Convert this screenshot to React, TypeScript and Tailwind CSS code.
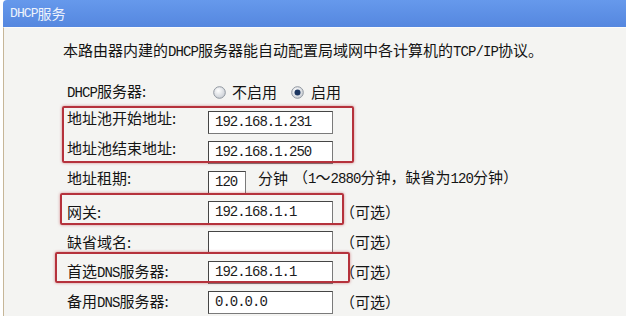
import React from "react";

const L = ({ children }: { children: React.ReactNode }) => (
  <span className="font-['Liberation_Mono',monospace] text-[14px] tracking-[-0.9px]">{children}</span>
);

const Radio = ({ checked }: { checked?: boolean }) => (
  <svg width="13" height="13" viewBox="0 0 13 13" className="shrink-0">
    <defs>
      <radialGradient id={checked ? "rg1" : "rg0"} cx="0.4" cy="0.35" r="0.7">
        <stop offset="0" stopColor="#ffffff" />
        <stop offset="1" stopColor="#c7ccd3" />
      </radialGradient>
    </defs>
    <circle cx="6.5" cy="6.5" r="5.8" fill={`url(#${checked ? "rg1" : "rg0"})`} stroke="#8f969f" strokeWidth="1" />
    {checked && <circle cx="6.5" cy="6.5" r="3" fill="#1b3660" />}
  </svg>
);

const Input = ({ value, w = "w-[125px]" }: { value?: string; w?: string }) => (
  <div
    className={`${w} h-[23px] bg-white border border-[#7a7a7a] border-t-[#454545] border-l-[#454545] flex items-center pl-[6px] font-['Liberation_Mono',monospace] text-[14px] tracking-[-1px] text-[#1c1c1c]`}
  >
    {value}
  </div>
);

const Row = ({ label, children, up }: { label: React.ReactNode; children: React.ReactNode; up?: boolean }) => (
  <div className="flex items-center h-[30px]">
    <div className={`w-[141px] shrink-0 ${up ? "-mt-[8px]" : ""}`}>{label}</div>
    {children}
  </div>
);

const Opt = () => <span className="ml-[7px]">（可选）</span>;

export default function App() {
  return (
    <div className="relative w-[626px] h-[316px] overflow-hidden bg-white font-['Noto_Sans_CJK_SC',sans-serif] text-[15px] text-[#141414]">
      <div className="ml-[3px] h-[27px] rounded-tl-[4px] bg-gradient-to-b from-[#6699ec] to-[#5587df] flex items-center pl-[7px] text-[14px] text-[#eef3fc]">
        <span className="font-['Liberation_Mono',monospace] text-[13px] tracking-[-0.9px]">DHCP</span>
        <span>服务</span>
      </div>
      <div className="ml-[3px] h-[289px] border-l border-[#c6b698] border-t border-t-[#fbfbfb] bg-[#f4f4f2]">
        <div className="pt-[12px] pl-[59px] leading-[20px] whitespace-nowrap">
          本路由器内建的<L>DHCP</L>服务器能自动配置局域网中各计算机的<L>TCP/IP</L>协议。
        </div>
        <div className="mt-[15px] pl-[63px] leading-[20px] whitespace-nowrap">
          <Row label={<><L>DHCP</L>服务器:</>}>
            <div className="flex items-center ml-[5px]">
              <Radio />
              <span className="ml-[6px]">不启用</span>
              <span className="ml-[14px]"><Radio checked /></span>
              <span className="ml-[7px]">启用</span>
            </div>
          </Row>
          <Row label="地址池开始地址:" up>
            <Input value="192.168.1.231" />
          </Row>
          <Row label="地址池结束地址:" up>
            <Input value="192.168.1.250" />
          </Row>
          <Row label="地址租期:" up>
            <Input value="120" w="w-[38px]" />
            <span className="ml-[12px] -mt-[8px]">分钟</span>
            <span className="ml-[5px] -mt-[8px]">
              （<L>1</L>～<L>2880</L>分钟，缺省为<L>120</L>分钟）
            </span>
          </Row>
          <Row label="网关:">
            <Input value="192.168.1.1" />
            <Opt />
          </Row>
          <Row label="缺省域名:">
            <Input value="" />
            <Opt />
          </Row>
          <Row label={<>首选<L>DNS</L>服务器:</>}>
            <Input value="192.168.1.1" />
            <Opt />
          </Row>
          <Row label={<>备用<L>DNS</L>服务器:</>}>
            <Input value="0.0.0.0" />
            <Opt />
          </Row>
        </div>
      </div>
      <div className="absolute left-[62px] top-[106px] w-[292px] h-[57px] border-2 border-[#b5323c] rounded-[2px] shadow-[0_0_3px_rgba(180,40,50,0.55)] pointer-events-none" />
      <div className="absolute left-[60px] top-[193px] w-[284px] h-[32px] border-2 border-[#b5323c] rounded-[2px] shadow-[0_0_3px_rgba(180,40,50,0.55)] pointer-events-none" />
      <div className="absolute left-[55px] top-[252px] w-[295px] h-[31px] border-2 border-[#b5323c] rounded-[2px] shadow-[0_0_3px_rgba(180,40,50,0.55)] pointer-events-none" />
    </div>
  );
}
